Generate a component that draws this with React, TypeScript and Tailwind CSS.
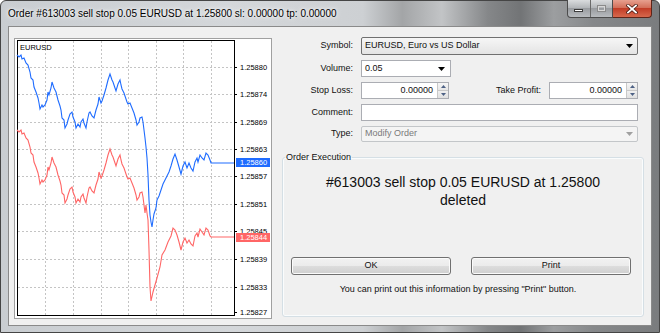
import React from 'react';

const blue: [number, number][] = [
  [17, 55], [19, 57], [21, 55], [22, 59], [24, 58], [26, 63], [28, 65], [30, 72], [31, 78], [33, 80],
  [34, 87], [36, 92], [38, 98], [39, 103], [40, 109], [42, 105], [43, 107], [45, 105], [47, 100], [48, 92],
  [49, 95], [51, 88], [52, 82], [54, 88], [56, 92], [58, 100], [60, 106], [61, 110], [62, 118], [64, 120],
  [65, 128], [67, 124], [68, 120], [70, 114], [72, 112], [73, 117], [75, 122], [76, 128], [78, 124], [80, 127],
  [81, 122], [83, 119], [84, 123], [86, 128], [87, 122], [89, 113], [90, 112], [92, 116], [94, 118], [96, 110],
  [98, 104], [99, 97], [101, 103], [102, 101], [104, 95], [106, 88], [108, 80], [110, 74], [112, 80], [113, 82],
  [115, 88], [116, 91], [118, 84], [120, 80], [121, 85], [122, 89], [124, 93], [126, 99], [127, 102], [128, 104],
  [130, 103], [132, 108], [134, 113], [136, 120], [137, 125], [139, 122], [140, 118], [142, 117], [143, 122], [144, 130],
  [145, 138], [146, 147], [147, 158], [148, 175], [149, 200], [150, 215], [151, 222], [152, 227], [153, 220], [154, 214],
  [156, 208], [157, 200], [159, 196], [161, 190], [163, 184], [165, 180], [167, 176], [169, 172], [171, 166], [173, 159],
  [175, 154], [177, 160], [179, 167], [181, 174], [183, 166], [185, 162], [187, 168], [189, 163], [191, 168], [193, 171],
  [195, 162], [197, 158], [198, 162], [200, 155], [202, 158], [204, 160], [206, 153], [208, 155], [210, 160], [211, 163],
  [234, 163],
];

const redTail: [number, number][] = [
  [146, 205], [147, 213], [148, 220], [149, 250], [150, 287], [151, 301], [153, 292], [155, 285], [157, 278], [160, 267],
  [162, 255], [165, 250], [168, 242], [171, 236], [173, 228], [175, 230], [177, 235], [179, 242], [181, 250], [183, 242],
  [185, 238], [187, 243], [189, 240], [191, 244], [193, 246], [195, 236], [197, 233], [198, 237], [200, 229], [202, 232],
  [204, 235], [206, 228], [208, 230], [210, 236], [211, 237], [234, 237],
];

const red: [number, number][] = [
  ...blue.filter(([x]) => x < 146).map(([x, y]) => [x, y + 75] as [number, number]),
  ...redTail,
];

const pts = (a: [number, number][]) => a.map(([x, y]) => `${x},${y}`).join(' ');

const gridX = [45, 73, 101, 128, 156, 183, 211];
const levels: [string, number][] = [
  ['1.25880', 67], ['1.25874', 94], ['1.25869', 122], ['1.25863', 149], ['1.25857', 176],
  ['1.25851', 204], ['1.25845', 231], ['1.25839', 259], ['1.25833', 287], ['1.25827', 312],
];

function Chart() {
  return (
    <div className="mt-[1px] h-[281px] w-[258px] shrink-0 border border-[#a0a0a0] bg-white">
      <svg width={256} height={279} viewBox="15 39 256 279" className="block">
        <rect x={15} y={39} width={256} height={279} fill="#fff" />
        {gridX.map((x) => (
          <line key={x} x1={x + 0.5} y1={41} x2={x + 0.5} y2={315} stroke="#c4c4c4" strokeDasharray="2 2" />
        ))}
        {levels.slice(0, 9).map(([, y]) => (
          <line key={y} x1={18} y1={y + 0.5} x2={234} y2={y + 0.5} stroke="#c4c4c4" strokeDasharray="2 2" />
        ))}
        <rect x={17.5} y={40.5} width={217} height={275} fill="none" stroke="#000" />
        <text x={20} y={47} fontSize={7.5} fontFamily="Liberation Sans, Arial, sans-serif" dominantBaseline="central" fill="#000">
          EURUSD
        </text>
        <polyline points={pts(red)} fill="none" stroke="#ff6666" strokeWidth={1.1} />
        <polyline points={pts(blue)} fill="none" stroke="#1f6cff" strokeWidth={1.1} />
        {levels.map(([t, y]) => (
          <g key={t}>
            <line x1={234} y1={y + 0.5} x2={237} y2={y + 0.5} stroke="#000" />
            <text x={240} y={y} fontSize={7.5} fontFamily="Liberation Sans, Arial, sans-serif" dominantBaseline="central" fill="#000">
              {t}
            </text>
          </g>
        ))}
        <rect x={236} y={158} width={34} height={9} fill="#1f6cff" />
        <text x={240} y={162.5} fontSize={7.5} fontFamily="Liberation Sans, Arial, sans-serif" dominantBaseline="central" fill="#fff">
          1.25860
        </text>
        <rect x={236} y={233} width={34} height={9} fill="#ff6666" />
        <text x={240} y={237.5} fontSize={7.5} fontFamily="Liberation Sans, Arial, sans-serif" dominantBaseline="central" fill="#fff">
          1.25844
        </text>
      </svg>
    </div>
  );
}

function Arrow({ gray }: { gray?: boolean }) {
  return (
    <svg width={7} height={4} viewBox="0 0 7 4">
      <path d="M0 0h7L3.5 4z" fill={gray ? '#a0a0a0' : '#000'} />
    </svg>
  );
}

function Spinner() {
  return (
    <div className="flex w-[11px] flex-col border-l border-[#c8c8c8]">
      <div className="flex flex-1 items-center justify-center border-b border-[#c8c8c8] bg-[linear-gradient(#f6f6f6,#e6e6e6)]">
        <svg width={5} height={3} viewBox="0 0 5 3"><path d="M0 3h5L2.5 0z" fill="#4d6185" /></svg>
      </div>
      <div className="flex flex-1 items-center justify-center bg-[linear-gradient(#f0f0f0,#e0e0e0)]">
        <svg width={5} height={3} viewBox="0 0 5 3"><path d="M0 0h5L2.5 3z" fill="#4d6185" /></svg>
      </div>
    </div>
  );
}

function Label({ children }: { children: React.ReactNode }) {
  return <div className="w-[71px] shrink-0 text-right">{children}</div>;
}

function Form() {
  return (
    <div className="ml-[10px] flex w-[362px] flex-col">
      <div className="flex h-[18px] items-center gap-[8px] pr-[6px]">
        <Label>Symbol:</Label>
        <div className="flex h-full flex-1 items-center justify-between rounded-[2px] border border-[#707070] bg-[linear-gradient(#f6f6f6,#e4e4e4)] pl-[3px] pr-[4px]">
          <span>EURUSD, Euro vs US Dollar</span>
          <Arrow />
        </div>
      </div>
      <div className="mt-[5px] flex h-[17px] items-center gap-[8px] pr-[6px]">
        <Label>Volume:</Label>
        <div className="flex h-full w-[90px] items-center justify-between border border-[#abadb3] bg-white pl-[3px] pr-[5px]">
          <span>0.05</span>
          <Arrow />
        </div>
      </div>
      <div className="mt-[5px] flex h-[17px] items-center pr-[6px]">
        <Label>Stop Loss:</Label>
        <div className="ml-[8px] flex h-full w-[88px] border border-[#abadb3] bg-white">
          <div className="flex flex-1 items-center justify-end pr-[4px]">0.00000</div>
          <Spinner />
        </div>
        <div className="flex-1 text-right">Take Profit:</div>
        <div className="ml-[8px] flex h-full w-[89px] border border-[#abadb3] bg-white">
          <div className="flex flex-1 items-center justify-end pr-[4px]">0.00000</div>
          <Spinner />
        </div>
      </div>
      <div className="mt-[5px] flex h-[17px] items-center gap-[8px] pr-[6px]">
        <Label>Comment:</Label>
        <div className="h-full flex-1 border border-[#abadb3] bg-white" />
      </div>
      <div className="mt-[5px] flex h-[16px] items-center gap-[8px] pr-[6px]">
        <Label>Type:</Label>
        <div className="flex h-full flex-1 items-center justify-between rounded-[2px] border border-[#c3c6c9] bg-[#f4f4f4] pl-[3px] pr-[4px] text-[#7a7a7a]">
          <span>Modify Order</span>
          <Arrow gray />
        </div>
      </div>
      <fieldset className="mt-[9px] h-[166px] rounded-[3px] border border-[#d5dfe5] shadow-[inset_0_0_0_1px_#fafcfd]">
        <legend className="ml-[2px] px-[1px] leading-[12px]">Order Execution</legend>
        <div className="mt-[10px] text-center text-[14px] leading-[18px]">
          #613003 sell stop 0.05 EURUSD at 1.25800
          <br />
          deleted
        </div>
        <div className="mt-[48px] flex gap-[20px] pl-[8px]">
          <button className="h-[18px] w-[160px] rounded-[3px] border border-[#707070] bg-[linear-gradient(#f2f2f2_0%,#ebebeb_50%,#dddddd_50%,#cfcfcf_100%)] shadow-[inset_0_0_0_1px_#fbfbfb]">
            OK
          </button>
          <button className="h-[18px] w-[160px] rounded-[3px] border border-[#707070] bg-[linear-gradient(#f2f2f2_0%,#ebebeb_50%,#dddddd_50%,#cfcfcf_100%)] shadow-[inset_0_0_0_1px_#fbfbfb]">
            Print
          </button>
        </div>
        <div className="mt-[8px] pr-[10px] text-center">You can print out this information by pressing "Print" button.</div>
      </fieldset>
    </div>
  );
}

export default function App() {
  return (
    <div className="h-[333px] w-[660px] bg-white font-['Liberation_Sans',Arial,sans-serif] text-[9px] text-[#111]">
      <div className="flex h-full w-full flex-col rounded-t-[6px] border border-[#454545] bg-[linear-gradient(90deg,#c9cdd1_0%,#d4d7da_35%,#cdd0d3_55%,#a3a5a7_61%,#c2c4c6_67%,#858789_74%,#727476_79%,#9c9ea0_84%,#86888a_90%,#7a7c7e_100%)]">
        <div className="flex h-[25px] shrink-0">
          <div className="self-center pl-[7px] text-[10px] text-black [text-shadow:0_0_6px_#fff,0_0_3px_#fff]">
            Order #613003 sell stop 0.05 EURUSD at 1.25800 sl: 0.00000 tp: 0.00000
          </div>
          <div className="ml-auto mr-[7px] -mt-px flex h-[18px]">
            <div className="flex w-[46px] rounded-bl-[4px] border border-t-0 border-[#4c4c4c] bg-[linear-gradient(#dadcde,#b4b7ba_45%,#999ca0_50%,#b8bbbe)]">
              <div className="flex w-[23px] items-end justify-center border-r border-[#6a6a6a] pb-[5px]">
                <div className="h-[3px] w-[9px] border border-[#3c3c3c] bg-white" />
              </div>
              <div className="flex w-[22px] items-center justify-center">
                <div className="h-[7px] w-[9px] border border-[#8a8a8a] bg-transparent shadow-[inset_0_0_0_1px_#d8d8d8]" />
              </div>
            </div>
            <div className="flex w-[39px] items-center justify-center rounded-br-[4px] border border-l-0 border-t-0 border-[#5e2418] bg-[linear-gradient(#e7a08f,#d36f5a_45%,#c23d27_50%,#d7684c)]">
              <svg width={12} height={10} viewBox="0 0 12 10">
                <path d="M2 1.5l8 7M10 1.5l-8 7" stroke="#4a1a12" strokeWidth={3.4} strokeLinecap="square" />
                <path d="M2 1.5l8 7M10 1.5l-8 7" stroke="#fff" strokeWidth={1.8} strokeLinecap="square" />
              </svg>
            </div>
          </div>
        </div>
        <div className="mx-[7px] mb-[6px] flex flex-1 border border-[#8a8a8a] bg-[#f0f0f0] pl-[5px] pt-[10px]">
          <Chart />
          <Form />
        </div>
      </div>
    </div>
  );
}
